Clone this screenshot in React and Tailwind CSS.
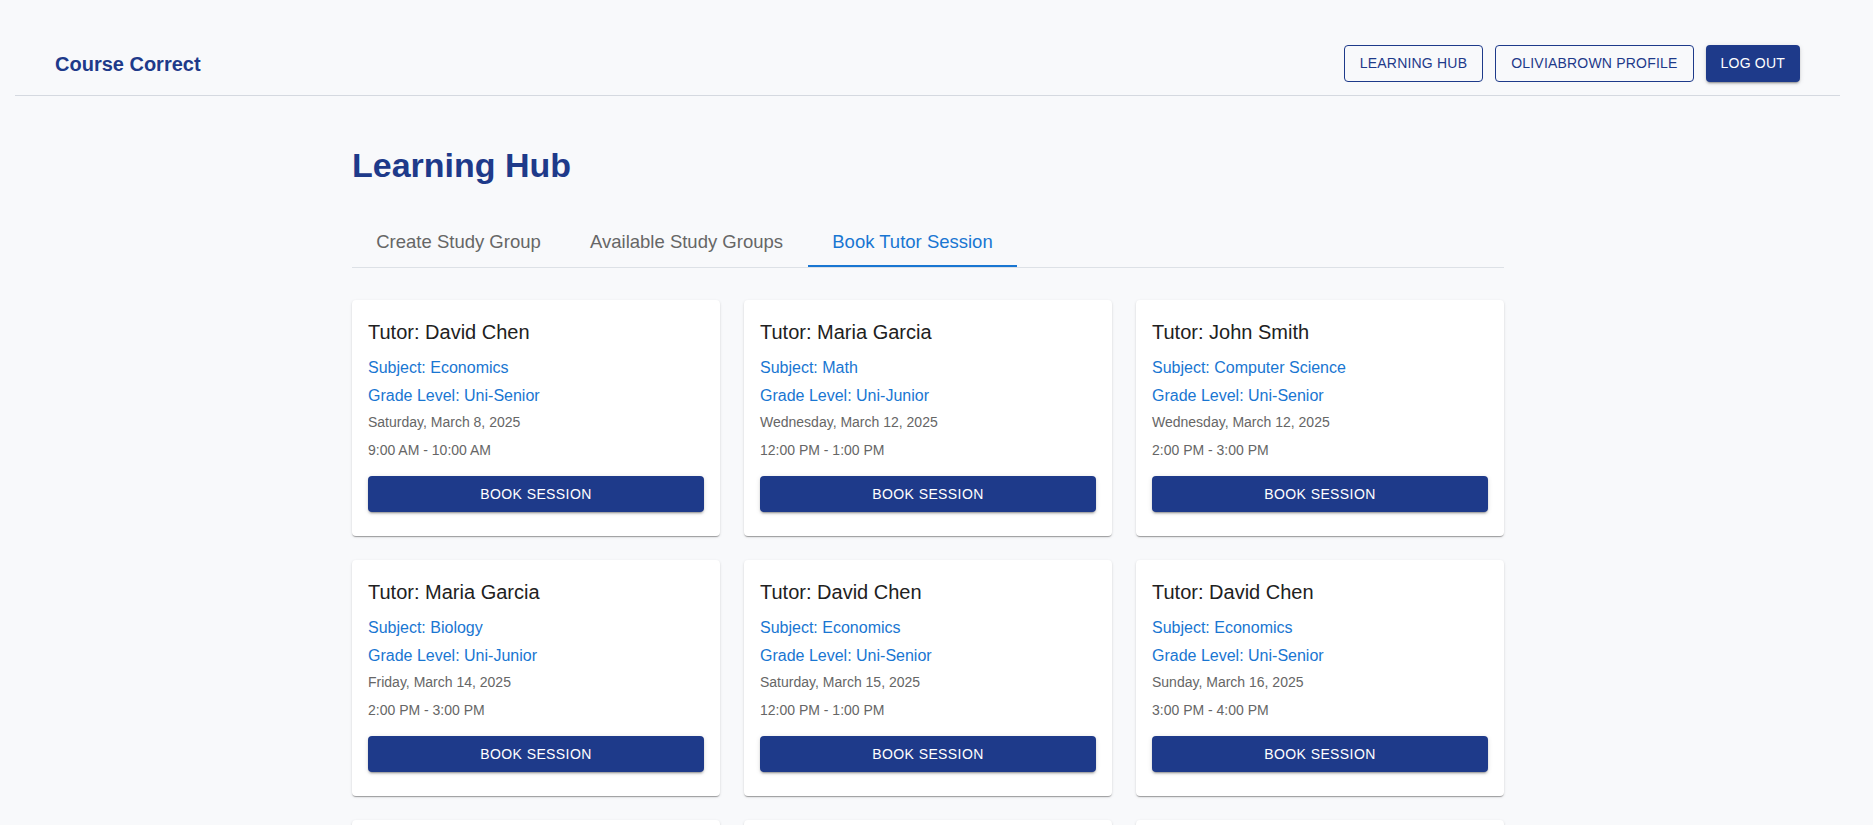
import React, { useState } from "react";

const sessions = [
  { tutor: "David Chen", subject: "Economics", grade: "Uni-Senior", date: "Saturday, March 8, 2025", time: "9:00 AM - 10:00 AM" },
  { tutor: "Maria Garcia", subject: "Math", grade: "Uni-Junior", date: "Wednesday, March 12, 2025", time: "12:00 PM - 1:00 PM" },
  { tutor: "John Smith", subject: "Computer Science", grade: "Uni-Senior", date: "Wednesday, March 12, 2025", time: "2:00 PM - 3:00 PM" },
  { tutor: "Maria Garcia", subject: "Biology", grade: "Uni-Junior", date: "Friday, March 14, 2025", time: "2:00 PM - 3:00 PM" },
  { tutor: "David Chen", subject: "Economics", grade: "Uni-Senior", date: "Saturday, March 15, 2025", time: "12:00 PM - 1:00 PM" },
  { tutor: "David Chen", subject: "Economics", grade: "Uni-Senior", date: "Sunday, March 16, 2025", time: "3:00 PM - 4:00 PM" },
  { tutor: "John Smith", subject: "Math", grade: "Uni-Junior", date: "Monday, March 17, 2025", time: "10:00 AM - 11:00 AM" },
  { tutor: "Maria Garcia", subject: "Chemistry", grade: "Uni-Senior", date: "Tuesday, March 18, 2025", time: "1:00 PM - 2:00 PM" },
  { tutor: "David Chen", subject: "Economics", grade: "Uni-Senior", date: "Thursday, March 20, 2025", time: "4:00 PM - 5:00 PM" },
];

const tabs = [
  { label: "Create Study Group", w: "w-[213px]" },
  { label: "Available Study Groups", w: "w-[243px]" },
  { label: "Book Tutor Session", w: "w-[209px]" },
];

function SessionCard({ s }) {
  return (
    <div className="bg-white rounded-[4px] shadow-[0px_2px_1px_-1px_rgba(0,0,0,0.2),0px_1px_1px_0px_rgba(0,0,0,0.14),0px_1px_3px_0px_rgba(0,0,0,0.12)] px-4 pt-4 pb-6">
      <div className="text-[20px] leading-[32px] text-[#212121] mb-2">Tutor: {s.tutor}</div>
      <div className="text-[16px] leading-[24px] text-[#1976d2] mb-1">Subject: {s.subject}</div>
      <div className="text-[16px] leading-[24px] text-[#1976d2] mb-1">Grade Level: {s.grade}</div>
      <div className="text-[14px] leading-[20px] text-[#666666] mb-2">{s.date}</div>
      <div className="text-[14px] leading-[20px] text-[#666666]">{s.time}</div>
      <button className="mt-4 w-full h-9 bg-[#1e3a8a] text-white text-[14px] rounded-[4px] uppercase tracking-[0.4px] shadow-[0px_3px_1px_-2px_rgba(0,0,0,0.2),0px_2px_2px_0px_rgba(0,0,0,0.14),0px_1px_5px_0px_rgba(0,0,0,0.12)]">
        Book Session
      </button>
    </div>
  );
}

export default function App() {
  const [tab, setTab] = useState(2);
  return (
    <div className="min-h-screen bg-[#f8f9fb] font-['Liberation_Sans',Arial,sans-serif] pt-8">
      {/* page was captured with a 17px scrollbar, keep the same content width */}
      <div className="mr-[17px]">
        <header className="ml-[15px] mr-4 h-16 px-10 flex items-center justify-between border-b border-[#d5d9e0]">
          <span className="text-[20px] font-bold text-[#1e3a8a]">Course Correct</span>
          <nav className="flex gap-3">
            <button className="h-[37px] px-[15px] border border-[#1e3a8a] rounded-[4px] text-[14px] uppercase tracking-[0.2px] text-[#1e3a8a]">
              Learning Hub
            </button>
            <button className="h-[37px] px-[15px] border border-[#1e3a8a] rounded-[4px] text-[14px] uppercase tracking-[0.2px] text-[#1e3a8a]">
              oliviabrown Profile
            </button>
            <button className="h-[37px] px-[15px] bg-[#1e3a8a] rounded-[4px] text-[14px] uppercase tracking-[0.2px] text-white shadow-[0px_3px_1px_-2px_rgba(0,0,0,0.2),0px_2px_2px_0px_rgba(0,0,0,0.14),0px_1px_5px_0px_rgba(0,0,0,0.12)]">
              Log Out
            </button>
          </nav>
        </header>

        <main className="max-w-[1200px] mx-auto px-6 pt-12 pb-10">
          <h1 className="text-[34px] leading-[42px] font-bold text-[#1e3a8a] mb-[33px]">Learning Hub</h1>

          <div className="flex border-b border-[#dde1e6]">
            {tabs.map((t, i) => (
              <button
                key={t.label}
                onClick={() => setTab(i)}
                className={`${t.w} h-12 text-[18.5px] text-center border-b-2 ${
                  tab === i ? "text-[#1976d2] border-[#1976d2]" : "text-[#666666] border-transparent"
                }`}
              >
                {t.label}
              </button>
            ))}
          </div>

          <div className="mt-8 grid grid-cols-3 gap-6">
            {sessions.map((s, i) => (
              <SessionCard key={i} s={s} />
            ))}
          </div>
        </main>
      </div>
    </div>
  );
}
